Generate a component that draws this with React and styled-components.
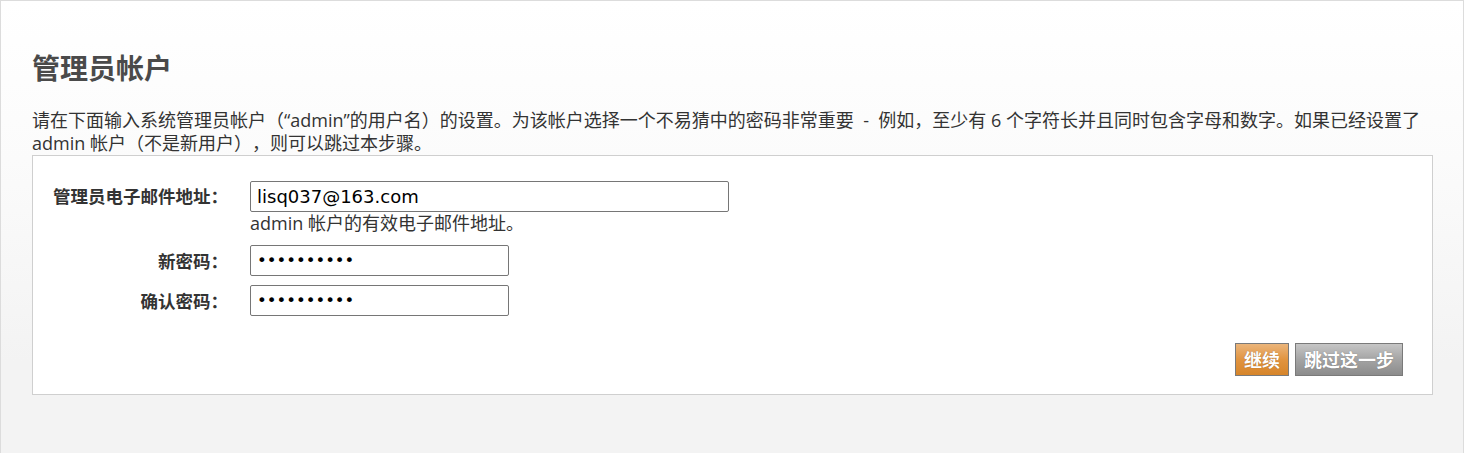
import React from "react";
import styled, { createGlobalStyle } from "styled-components";

const Global = createGlobalStyle`
  html, body { margin: 0; padding: 0; background: #fff; }
  body {
    font-family: "Open Sans", "Noto Sans CJK SC", sans-serif;
    text-spacing-trim: space-all;
  }
`;

const Page = styled.div`
  box-sizing: border-box;
  width: 1464px;
  height: 453px;
  border: 1px solid #dcdcdc;
  border-bottom: none;
  background: linear-gradient(to bottom, #ffffff 0%, #fbfbfb 35%, #f3f3f3 80%, #f3f3f3 100%);
  padding: 46px 30px 0 31px;
`;

const Title = styled.h1`
  margin: 0 0 22px;
  font-family: "Noto Sans CJK SC", sans-serif;
  font-size: 28px;
  line-height: 40px;
  font-weight: 700;
  color: #4a4a4a;
`;

const Intro = styled.p`
  margin: 0;
  font-size: 18px;
  line-height: 23px;
  color: #333;
`;

const FormBox = styled.div`
  box-sizing: border-box;
  background: #fff;
  border: 1px solid #cfcfcf;
  padding: 25px 29px 18px 0;
`;

const Grid = styled.div`
  display: grid;
  grid-template-columns: 195px 1fr;
  column-gap: 22px;
  align-items: center;
`;

const Label = styled.label`
  align-self: ${(p) => (p.$top === undefined ? "start" : "center")};
  text-align: right;
  font-family: "Noto Sans CJK SC", sans-serif;
  font-size: 17.5px;
  font-weight: 700;
  color: #333;
  line-height: 30px;
  margin-top: ${(p) => p.$top || 0}px;
`;

const Field = styled.div`
  display: flex;
  flex-direction: column;
  margin-top: ${(p) => p.$top || 0}px;
`;

const Input = styled.input`
  box-sizing: border-box;
  width: ${(p) => p.$w}px;
  height: 31px;
  border: 1px solid #767676;
  border-radius: 2px;
  padding: 0 6px;
  font-family: "DejaVu Sans", sans-serif;
  font-size: ${(p) => (p.type === "password" ? 16.5 : 18)}px;
  color: #000;
  background: #fff;
  outline: none;
`;

const Hint = styled.div`
  font-size: 18px;
  line-height: 23px;
  color: #333;
`;

const Actions = styled.div`
  display: flex;
  justify-content: flex-end;
  gap: 6px;
  margin-top: 27px;
`;

const Button = styled.button`
  box-sizing: border-box;
  height: 33px;
  padding: 0 8px;
  border: 1px solid #7a7a7a;
  border-radius: 0;
  font-family: "Noto Sans CJK SC", sans-serif;
  font-size: 18px;
  line-height: 31px;
  font-weight: 700;
  color: #fff;
  text-shadow: 0 0 1px rgba(0, 0, 0, 0.35);
  cursor: pointer;
  background: ${(p) =>
    p.$variant === "primary"
      ? "linear-gradient(to bottom, #ebb57b 0%, #e19440 50%, #d6852a 100%)"
      : "linear-gradient(to bottom, #c6c6c6 0%, #a4a4a4 50%, #8c8c8c 100%)"};
`;

export default function App() {
  return (
    <>
      <Global />
      <Page>
        <Title>管理员帐户</Title>
        <Intro>
          请在下面输入系统管理员帐户（“admin”的用户名）的设置。为该帐户选择一个不易猜中的密码非常重要 &nbsp;- &nbsp;例如，至少有 6 个字符长并且同时包含字母和数字。如果已经设置了 admin 帐户（不是新用户），则可以跳过本步骤。
        </Intro>
        <FormBox>
          <Grid>
            <Label>管理员电子邮件地址：</Label>
            <Field>
              <Input $w={479} type="text" defaultValue="lisq037@163.com" />
              <Hint>admin 帐户的有效电子邮件地址。</Hint>
            </Field>
            <Label $top={10}>新密码：</Label>
            <Field $top={10}>
              <Input $w={259} type="password" defaultValue="1234567890" />
            </Field>
            <Label $top={9}>确认密码：</Label>
            <Field $top={9}>
              <Input $w={259} type="password" defaultValue="1234567890" />
            </Field>
          </Grid>
          <Actions>
            <Button $variant="primary">继续</Button>
            <Button>跳过这一步</Button>
          </Actions>
        </FormBox>
      </Page>
    </>
  );
}
